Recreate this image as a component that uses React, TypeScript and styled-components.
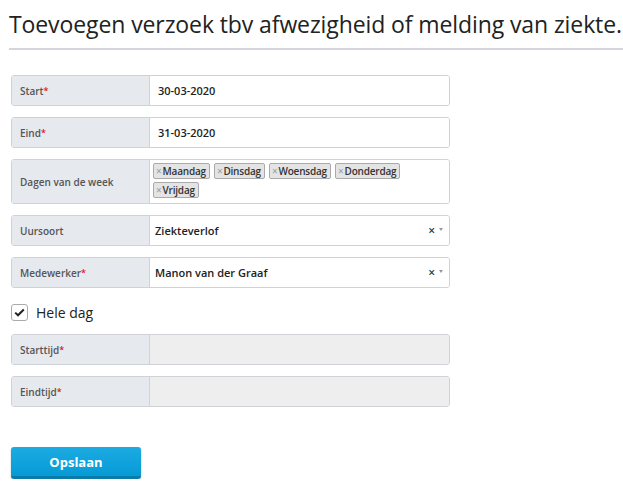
import styled, { createGlobalStyle } from "styled-components";

const GlobalStyle = createGlobalStyle`
  body {
    margin: 0;
    background: #ffffff;
    font-family: "Open Sans", "Liberation Sans", sans-serif;
    color: #222;
  }
`;

const Page = styled.div`
  padding: 10px 0 0 11px;
`;

const Title = styled.h1`
  margin: 0 -11px 0 -2px;
  font-size: 23px;
  font-weight: 400;
  letter-spacing: -0.1px;
  white-space: nowrap;
  color: #222;
  line-height: 28px;
  padding-bottom: 10px;
  border-bottom: 2px solid #d3d6dd;
`;

const Form = styled.div`
  display: flex;
  flex-direction: column;
  gap: 11px;
  width: 439px;
  margin-top: 25px;
`;

const Row = styled.div<{ $tall?: boolean }>`
  display: flex;
  height: ${(p) => (p.$tall ? 43 : 29)}px;
  border: 1px solid #cfd2d6;
  border-radius: 3px;
  overflow: hidden;
`;

const Label = styled.div`
  width: 138px;
  flex-shrink: 0;
  display: flex;
  align-items: center;
  padding-left: 8px;
  box-sizing: border-box;
  background: #e6e9ee;
  border-right: 1px solid #cfd2d6;
  font-size: 10px;
  font-weight: 600;
  color: #555;
`;

const Req = styled.span`
  color: #e0141e;
  font-size: 9px;
  vertical-align: top;
  line-height: 12px;
`;

const Field = styled.div<{ $disabled?: boolean; $pad?: number }>`
  flex: 1;
  display: flex;
  align-items: center;
  padding-left: ${(p) => p.$pad ?? 8}px;
  padding-right: 6px;
  background: ${(p) => (p.$disabled ? "#eeeeee" : "#ffffff")};
  font-size: 11px;
  font-weight: 600;
  color: #222;
`;

const Tags = styled.div`
  flex: 1;
  display: flex;
  flex-wrap: wrap;
  align-content: flex-start;
  gap: 3px 4px;
  padding: 3px;
  background: #fff;
`;

const Tag = styled.span`
  display: inline-flex;
  align-items: center;
  height: 14px;
  padding: 0 3px 0 2px;
  background: #e4e4e4;
  border: 1px solid #aaa;
  border-radius: 2px;
  font-size: 10px;
  font-weight: 600;
  letter-spacing: -0.2px;
  color: #333;
`;

const TagX = styled.span`
  color: #999;
  font-size: 10px;
  margin-right: 1px;
  font-weight: 400;
`;

const SelectValue = styled.span`
  flex: 1;
`;

const Clear = styled.span`
  font-size: 12px;
  color: #333;
  margin-right: 4px;
  font-weight: 600;
`;

const Caret = styled.span`
  width: 0;
  height: 0;
  border-left: 2.5px solid transparent;
  border-right: 2.5px solid transparent;
  border-top: 3.5px solid #999;
  margin-bottom: 3px;
`;

const CheckRow = styled.label`
  display: flex;
  align-items: center;
  gap: 8px;
  margin: 4px 0 1px;
  font-size: 14px;
  color: #222;
`;

const Box = styled.span`
  width: 17px;
  height: 17px;
  border: 1px solid #aaa;
  border-radius: 3px;
  display: flex;
  align-items: center;
  justify-content: center;
  box-sizing: border-box;
`;

const Button = styled.button`
  margin-top: 40px;
  width: 130px;
  height: 32px;
  border: none;
  border-bottom: 3px solid #0a7aa8;
  border-radius: 3px;
  background: linear-gradient(#1cabe2, #069ad6);
  color: #fff;
  font-family: "Open Sans", "Liberation Sans", sans-serif;
  font-size: 13px;
  font-weight: 700;
  box-shadow: 0 1px 2px rgba(0, 0, 0, 0.25);
`;

const days = ["Maandag", "Dinsdag", "Woensdag", "Donderdag", "Vrijdag"];

function App() {
  return (
    <>
      <GlobalStyle />
      <Page>
        <Title>Toevoegen verzoek tbv afwezigheid of melding van ziekte.</Title>
        <Form>
          <Row>
            <Label>
              Start<Req>*</Req>
            </Label>
            <Field>30-03-2020</Field>
          </Row>
          <Row>
            <Label>
              Eind<Req>*</Req>
            </Label>
            <Field>31-03-2020</Field>
          </Row>
          <Row $tall>
            <Label>Dagen van de week</Label>
            <Tags>
              {days.map((d) => (
                <Tag key={d}>
                  <TagX>×</TagX>
                  {d}
                </Tag>
              ))}
            </Tags>
          </Row>
          <Row>
            <Label>Uursoort</Label>
            <Field $pad={5}>
              <SelectValue>Ziekteverlof</SelectValue>
              <Clear>×</Clear>
              <Caret />
            </Field>
          </Row>
          <Row>
            <Label>
              Medewerker<Req>*</Req>
            </Label>
            <Field $pad={5}>
              <SelectValue>Manon van der Graaf</SelectValue>
              <Clear>×</Clear>
              <Caret />
            </Field>
          </Row>
          <CheckRow>
            <Box>
              <svg width="11" height="9" viewBox="0 0 11 9">
                <path
                  d="M1.2 4.6 L4 7.3 L9.8 1.5"
                  fill="none"
                  stroke="#222"
                  strokeWidth="2"
                />
              </svg>
            </Box>
            Hele dag
          </CheckRow>
          <Row>
            <Label>
              Starttijd<Req>*</Req>
            </Label>
            <Field $disabled />
          </Row>
          <Row>
            <Label>
              Eindtijd<Req>*</Req>
            </Label>
            <Field $disabled />
          </Row>
        </Form>
        <Button>Opslaan</Button>
      </Page>
    </>
  );
}

export default App;
